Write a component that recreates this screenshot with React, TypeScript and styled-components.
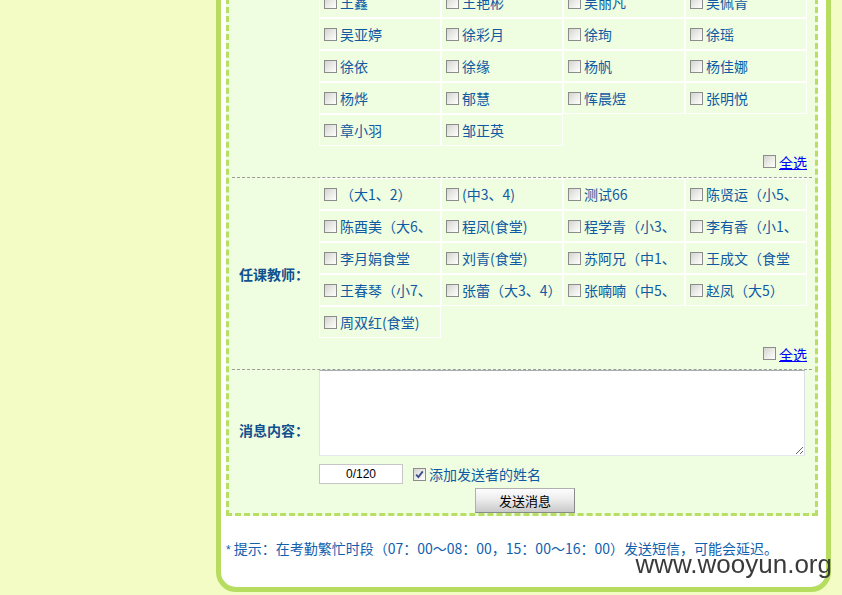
import React from 'react';
import styled, { createGlobalStyle } from 'styled-components';

const GlobalStyle = createGlobalStyle`
  html, body { margin: 0; padding: 0; }
  body {
    background: #f3fcc4;
    font-family: "Noto Sans CJK SC", "Microsoft YaHei", sans-serif;
    overflow: hidden;
  }
`;

const Page = styled.div`
  padding-left: 216px;
`;

const Card = styled.div`
  width: 615px;
  box-sizing: border-box;
  margin-top: -30px;
  background: #fff;
  border: 5px solid #b6dd60;
  border-radius: 0 0 20px 20px;
  padding: 5px 8px 27px 5px;
`;

const Panel = styled.div`
  background: #effde0;
  border: 3px dashed #b8df63;
  padding: 3px 3px 0 3px;
`;

const Section = styled.div<{ $divider?: boolean }>`
  display: grid;
  grid-template-columns: 86px 1fr;
  border-bottom: ${(p) => (p.$divider ? '1px dashed #9c9c9c' : 'none')};
`;

const Label = styled.div<{ $offset?: number }>`
  display: flex;
  align-items: center;
  padding-left: 7px;
  padding-top: ${(p) => p.$offset ?? 0}px;
  font-size: 14px;
  font-weight: bold;
  color: #10518f;
  white-space: nowrap;
`;

const Content = styled.div`
  padding: 0 5px 0 1px;
`;

const NameGrid = styled.div`
  display: grid;
  grid-template-columns: repeat(4, 122px);
`;

const NameCell = styled.label`
  box-sizing: border-box;
  height: 32px;
  border: 1px solid #ffffff;
  display: flex;
  align-items: center;
  padding-left: 4px;
  overflow: hidden;
  white-space: nowrap;
  font-size: 14px;
  line-height: 18px;
  color: #0f5aa3;
`;

const CellText = styled.span`
  margin-left: 3px;
`;

const Box = styled.span`
  display: inline-flex;
  align-items: center;
  justify-content: center;
  width: 13px;
  height: 13px;
  box-sizing: border-box;
  border: 1px solid #8c8c8c;
  background: linear-gradient(135deg, #d3d3cf 0%, #efefec 60%, #ffffff 100%);
  flex: none;
`;

const SelectAllRow = styled.div`
  height: 31px;
  display: flex;
  align-items: center;
  justify-content: flex-end;
`;

const SelectAllLink = styled.a`
  margin-left: 3px;
  font-size: 14px;
  line-height: 16px;
  color: #0000ff;
  text-decoration: underline;
  cursor: pointer;
`;

const MessageArea = styled.textarea`
  display: block;
  width: 486px;
  height: 86px;
  box-sizing: border-box;
  margin: 0;
  border: 1px solid;
  border-color: #abadb3 #dbdfe6 #e3e9ef #e2e3ea;
  background: #fff;
  font-family: inherit;
`;

const MetaRow = styled.div`
  margin-top: 8px;
  height: 20px;
  display: flex;
  align-items: center;
`;

const Counter = styled.input`
  width: 84px;
  height: 20px;
  box-sizing: border-box;
  margin: 0 10px 0 0;
  padding: 0;
  border: 1px solid #c6c6c6;
  background: #fff;
  text-align: center;
  font-family: "Liberation Sans", Arial, sans-serif;
  font-size: 12px;
  color: #000;
`;

const MetaLabel = styled.span`
  margin-left: 3px;
  font-size: 14px;
  line-height: 18px;
  color: #0f5aa3;
`;

const ButtonRow = styled.div`
  grid-column: 1 / span 2;
  display: flex;
  justify-content: center;
  padding: 4px 0 0 6px;
`;

const SendButton = styled.button`
  width: 100px;
  height: 25px;
  box-sizing: border-box;
  margin: 0;
  padding: 0;
  border: 1px solid #8a8a8a;
  border-top-color: #b0b0b0;
  border-left-color: #b0b0b0;
  background: linear-gradient(#fdfdfd 0%, #ececec 45%, #c9c9c9 100%);
  font-family: "Noto Sans CJK SC", "Microsoft YaHei", sans-serif;
  font-size: 13px;
  color: #000;
`;

const Hint = styled.div`
  margin-top: 22px;
  font-size: 14px;
  line-height: 20px;
  color: #1160ad;
  white-space: nowrap;
`;

const Star = styled.span`
  font-family: "Liberation Sans", Arial, sans-serif;
  font-size: 12px;
  margin-right: 3px;
`;

const Watermark = styled.div`
  position: fixed;
  right: 10px;
  bottom: 18px;
  font-family: "Liberation Sans", Arial, sans-serif;
  font-size: 26px;
  line-height: 26px;
  color: #3a3a3a;
`;

function Check({ checked }: { checked?: boolean }) {
  return (
    <Box>
      {checked && (
        <svg width="9" height="9" viewBox="0 0 9 9">
          <path d="M1.2 4.6 L3.4 7 L7.8 1.4" fill="none" stroke="#3b4b8c" strokeWidth="1.8" />
        </svg>
      )}
    </Box>
  );
}

const students = [
  '王鑫', '王艳彬', '吴丽凡', '吴佩青',
  '吴亚婷', '徐彩月', '徐珣', '徐瑶',
  '徐依', '徐缘', '杨帆', '杨佳娜',
  '杨烨', '郁慧', '恽晨煜', '张明悦',
  '章小羽', '邹正英',
];

const teachers = [
  '（大1、2）', '(中3、4)', '测试66', '陈贤运（小5、',
  '陈酉美（大6、', '程凤(食堂)', '程学青（小3、', '李有香（小1、',
  '李月娟食堂', '刘青(食堂)', '苏阿兄（中1、', '王成文（食堂',
  '王春琴（小7、', '张蕾（大3、4）', '张喃喃（中5、', '赵凤（大5）',
  '周双红(食堂)',
];

function Names({ list }: { list: string[] }) {
  return (
    <NameGrid>
      {list.map((n, i) => (
        <NameCell key={i}>
          <Check />
          <CellText>{n}</CellText>
        </NameCell>
      ))}
    </NameGrid>
  );
}

function SelectAll() {
  return (
    <SelectAllRow>
      <Check />
      <SelectAllLink>全选</SelectAllLink>
    </SelectAllRow>
  );
}

export default function App() {
  return (
    <>
      <GlobalStyle />
      <Page>
        <Card>
          <Panel>
            <Section $divider>
              <Label />
              <Content>
                <Names list={students} />
                <SelectAll />
              </Content>
            </Section>
            <Section $divider>
              <Label>任课教师：</Label>
              <Content>
                <Names list={teachers} />
                <SelectAll />
              </Content>
            </Section>
            <Section>
              <Label $offset={6}>消息内容：</Label>
              <Content>
                <MessageArea />
                <MetaRow>
                  <Counter readOnly value="0/120" />
                  <Check checked />
                  <MetaLabel>添加发送者的姓名</MetaLabel>
                </MetaRow>
              </Content>
              <ButtonRow>
                <SendButton>发送消息</SendButton>
              </ButtonRow>
            </Section>
          </Panel>
          <Hint>
            <Star>*</Star>提示：在考勤繁忙时段（07：00～08：00，15：00～16：00）发送短信，可能会延迟。
          </Hint>
        </Card>
      </Page>
      <Watermark>www.wooyun.org</Watermark>
    </>
  );
}
